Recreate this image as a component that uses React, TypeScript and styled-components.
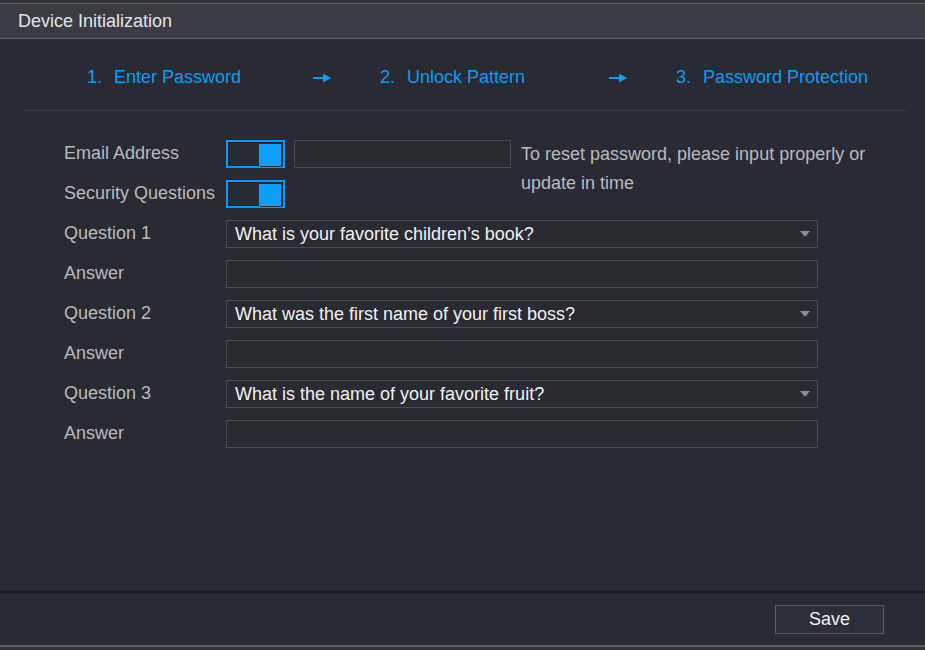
import React from "react";
import styled, { createGlobalStyle } from "styled-components";

const GlobalStyle = createGlobalStyle`
  html, body {
    margin: 0;
    padding: 0;
    background: #292a33;
  }
  body {
    font-family: "Liberation Sans", Arial, sans-serif;
  }
`;

const Page = styled.div`
  width: 925px;
  height: 650px;
  display: flex;
  flex-direction: column;
  background: #292a33;
  overflow: hidden;
`;

const TopEdge = styled.div`
  height: 3px;
  background: #31323a;
`;

const TitleBar = styled.div`
  height: 34px;
  display: flex;
  align-items: center;
  padding-left: 18px;
  background: #3a3b44;
  border-top: 1px solid #5b5e67;
  border-bottom: 1px solid #60636c;
  color: #e4e4e6;
  font-size: 18px;
`;

const Body = styled.div`
  flex: 1;
  display: flex;
  flex-direction: column;
  padding: 0 20px 0 22px;
`;

const Steps = styled.div`
  height: 72px;
  display: flex;
  align-items: center;
  padding-left: 65px;
  padding-top: 5px;
  border-bottom: 1px solid #3b3d46;
  box-sizing: border-box;
`;

const Step = styled.div<{ $width?: number }>`
  width: ${p => (p.$width ? `${p.$width}px` : "auto")};
  color: #0b9df2;
  font-size: 18px;
  white-space: nowrap;
`;

const StepNum = styled.span`
  margin-right: 12px;
`;

const ArrowCell = styled.div`
  width: 67px;
  display: flex;
  align-items: center;
  padding-top: 2px;
`;

const Form = styled.div`
  display: grid;
  grid-template-columns: 153px 59px 217px 1fr;
  grid-auto-rows: 28px;
  column-gap: 9px;
  row-gap: 12px;
  padding: 29px 0 0 42px;
`;

const Label = styled.div`
  grid-column: 1;
  display: flex;
  align-items: center;
  margin-top: -1px;
  color: #b9babe;
  font-size: 18px;
  white-space: nowrap;
`;

const Toggle = styled.div`
  grid-column: 2;
  box-sizing: border-box;
  border: 2px solid #0a9cf4;
  background: #262c33;
  box-shadow: inset 0 0 0 1px #1e2126;
  position: relative;
`;

const Knob = styled.div`
  position: absolute;
  right: 2px;
  top: 2px;
  width: 22px;
  height: 22px;
  background: #0aa0ff;
  box-shadow: 1px 1px 0 #1c3140;
`;

const TextBox = styled.div<{ $wide?: boolean }>`
  grid-column: ${p => (p.$wide ? "2 / -1" : "3")};
  width: ${p => (p.$wide ? "592px" : "auto")};
  box-sizing: border-box;
  border: 1px solid #4a4b54;
  background: #292a32;
`;

const Hint = styled.div`
  grid-column: 4;
  grid-row: 1 / span 2;
  padding-left: 1px;
  color: #b9babe;
  font-size: 18px;
  line-height: 29px;
`;

const Select = styled.div`
  grid-column: 2 / -1;
  width: 592px;
  box-sizing: border-box;
  border: 1px solid #4a4b54;
  background: #292a32;
  display: flex;
  align-items: center;
  justify-content: space-between;
  padding: 0 7px 0 8px;
  color: #f1f1f3;
  font-size: 18px;
`;

const Footer = styled.div`
  height: 52px;
  display: flex;
  align-items: center;
  justify-content: flex-end;
  padding-right: 41px;
  border-top: 2px solid #1c1d24;
  border-bottom: 2px solid #5c5f68;
`;

const SaveButton = styled.button`
  width: 109px;
  height: 29px;
  margin-top: 1px;
  border: 1px solid #5a5c65;
  background: #2d2e37;
  color: #f0f0f2;
  font-family: "Liberation Sans", Arial, sans-serif;
  font-size: 18px;
  padding: 0;
  cursor: pointer;
`;

const BottomEdge = styled.div`
  height: 3px;
  background: #33343c;
`;

function Arrow() {
  return (
    <svg width="18" height="10" viewBox="0 0 18 10">
      <rect x="0" y="4" width="11" height="2" fill="#0b9df2" />
      <path d="M10 0.5 L18 5 L10 9.5 Z" fill="#0b9df2" />
    </svg>
  );
}

function Caret() {
  return (
    <svg width="10" height="6" viewBox="0 0 10 6">
      <path d="M0 0 L10 0 L5 6 Z" fill="#8b8c93" />
    </svg>
  );
}

const questions = [
  "What is your favorite children’s book?",
  "What was the first name of your first boss?",
  "What is the name of your favorite fruit?",
];

export default function App() {
  return (
    <Page>
      <GlobalStyle />
      <TopEdge />
      <TitleBar>Device Initialization</TitleBar>
      <Body>
        <Steps>
          <Step $width={226}>
            <StepNum>1.</StepNum>Enter Password
          </Step>
          <ArrowCell>
            <Arrow />
          </ArrowCell>
          <Step $width={229}>
            <StepNum>2.</StepNum>Unlock Pattern
          </Step>
          <ArrowCell>
            <Arrow />
          </ArrowCell>
          <Step>
            <StepNum>3.</StepNum>Password Protection
          </Step>
        </Steps>
        <Form>
          <Label>Email Address</Label>
          <Toggle>
            <Knob />
          </Toggle>
          <TextBox />
          <Hint>
            To reset password, please input properly or
            <br />
            update in time
          </Hint>
          <Label>Security Questions</Label>
          <Toggle>
            <Knob />
          </Toggle>
          {questions.map((q, i) => (
            <React.Fragment key={q}>
              <Label>Question {i + 1}</Label>
              <Select>
                {q}
                <Caret />
              </Select>
              <Label>Answer</Label>
              <TextBox $wide />
            </React.Fragment>
          ))}
        </Form>
      </Body>
      <Footer>
        <SaveButton>Save</SaveButton>
      </Footer>
      <BottomEdge />
    </Page>
  );
}
